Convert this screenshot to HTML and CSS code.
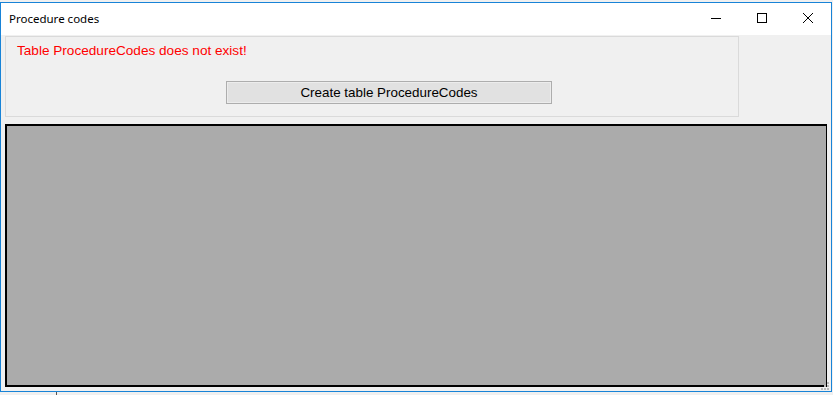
FILE: index.html
```html
<!DOCTYPE html>
<html>
<head>
  <meta charset="utf-8">
  <title>Procedure codes</title>
  <link rel="stylesheet" href="styles.css">
</head>
<body>
  <div class="window">
    <div class="titlebar">
      <span class="title">Procedure codes</span>
      <div class="caption-buttons">
        <span class="cap-btn">
          <svg width="10" height="10" viewBox="0 0 10 10"><path d="M0 5.5H10" stroke="#000" stroke-width="1"/></svg>
        </span>
        <span class="cap-btn">
          <svg width="10" height="10" viewBox="0 0 10 10"><rect x="0.5" y="0.5" width="9" height="9" fill="none" stroke="#000" stroke-width="1"/></svg>
        </span>
        <span class="cap-btn">
          <svg width="10" height="10" viewBox="0 0 10 10"><path d="M0 0L10 10M10 0L0 10" stroke="#000" stroke-width="1"/></svg>
        </span>
      </div>
    </div>

    <div class="client">
      <div class="group">
        <div class="message">Table ProcedureCodes does not exist!</div>
        <button class="create-btn">Create table ProcedureCodes</button>
      </div>

      <div class="grid-area"></div>

      <div class="grip">
        <svg width="8" height="8" viewBox="0 0 8 8">
          <rect x="6" y="0" width="2" height="2" fill="#b8b8b8"/>
          <rect x="3" y="3" width="2" height="2" fill="#b8b8b8"/>
          <rect x="6" y="3" width="2" height="2" fill="#b8b8b8"/>
          <rect x="0" y="6" width="2" height="2" fill="#b8b8b8"/>
          <rect x="3" y="6" width="2" height="2" fill="#b8b8b8"/>
          <rect x="6" y="6" width="2" height="2" fill="#b8b8b8"/>
        </svg>
      </div>
    </div>
  </div>
  <div class="desktop-strip"><span class="strip-line"></span></div>
</body>
</html>
```
FILE: styles.css
```css
body {
  margin: 0;
  background: #f0f0f0;
  font-family: "Liberation Sans", Arial, sans-serif;
  width: 833px;
  height: 395px;
  overflow: hidden;
}

.window {
  margin-top: 2px;
  width: 832px;
  height: 390px;
  box-sizing: border-box;
  border: 1px solid #1883d7;
  background: #f0f0f0;
  display: flex;
  flex-direction: column;
}

.titlebar {
  height: 32px;
  background: #fff;
  display: flex;
  align-items: center;
  justify-content: space-between;
}

.title {
  font-family: "Noto Sans", sans-serif;
  font-size: 11.5px;
  color: #000;
  padding-left: 8px;
  padding-bottom: 2px;
}

.caption-buttons {
  display: flex;
  height: 100%;
}

.cap-btn {
  width: 46px;
  display: flex;
  align-items: center;
  justify-content: center;
  padding-bottom: 2px;
}

.client {
  flex: 1;
  position: relative;
  padding: 1px 0 0 4px;
}

.group {
  width: 734px;
  height: 81px;
  box-sizing: border-box;
  border: 1px solid #dadada;
}

.message {
  color: #ff0000;
  font-size: 13.6px;
  padding: 6px 0 0 11px;
}

.create-btn {
  display: block;
  margin: 23px 0 0 220px;
  width: 326px;
  height: 23px;
  border: 1px solid #adadad;
  background: #e1e1e1;
  box-shadow: inset 0 0 0 1px #ececec;
  font-family: "Liberation Sans", Arial, sans-serif;
  font-size: 13.4px;
  color: #000;
  padding: 0 0 1px;
}

.grid-area {
  margin-top: 7px;
  width: 822px;
  height: 263px;
  box-sizing: border-box;
  border: 1px solid #000;
  border-width: 2px 1px 2px 2px;
  background: #ababab;
}

.grip {
  position: absolute;
  right: 2px;
  bottom: 1px;
  line-height: 0;
}

.desktop-strip {
  height: 3px;
  position: relative;
}

.strip-line {
  position: absolute;
  left: 56px;
  top: 0;
  width: 1px;
  height: 3px;
  background: #555;
}
```
